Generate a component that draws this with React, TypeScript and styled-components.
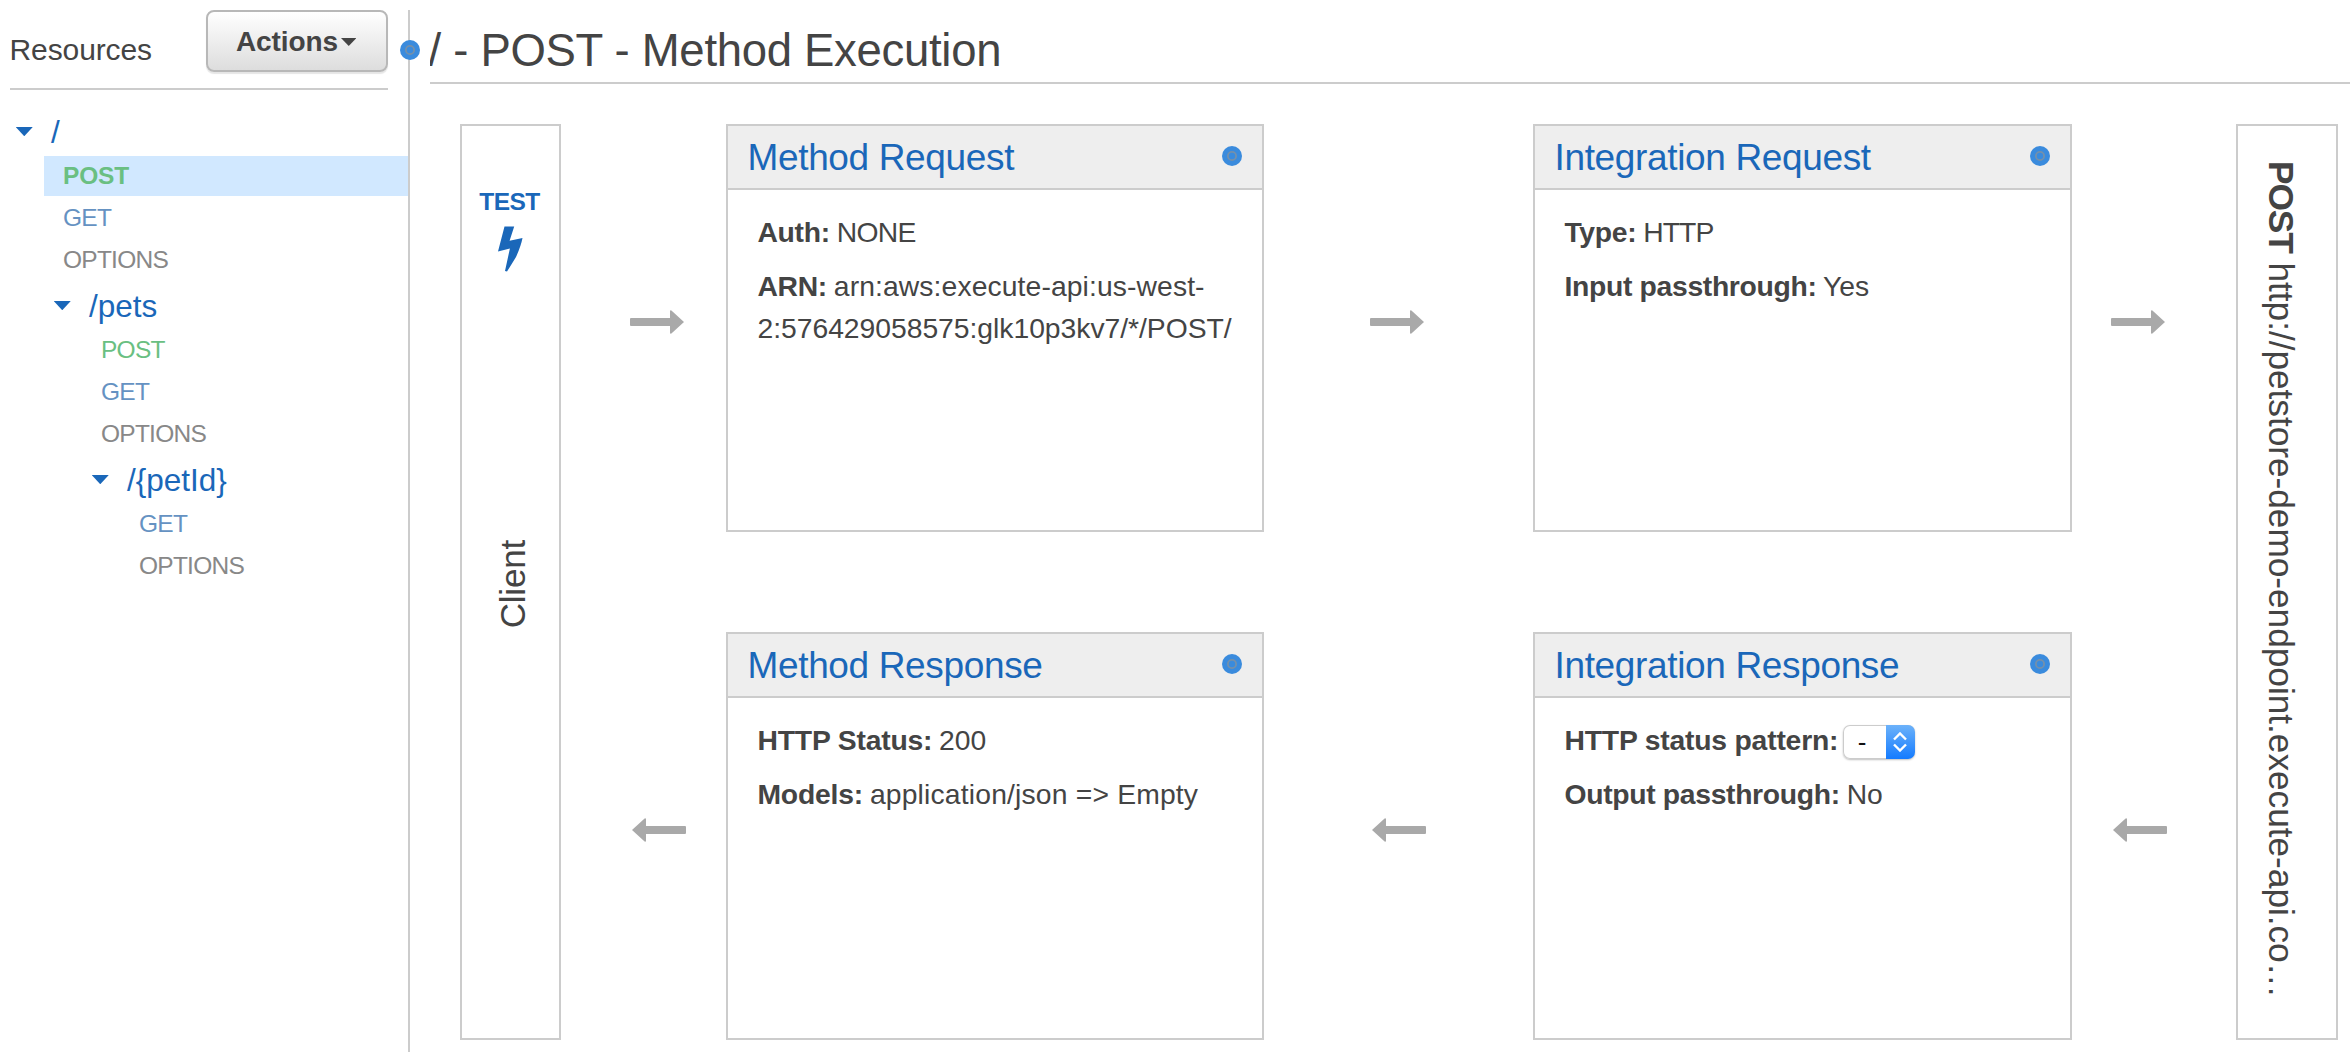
import React from 'react';
import styled, { createGlobalStyle } from 'styled-components';

const GlobalStyle = createGlobalStyle`
  * { box-sizing: border-box; }
  body {
    margin: 0;
    background: #fff;
    color: #444;
    font-family: "Liberation Sans", Arial, Helvetica, sans-serif;
  }
`;

const LINE = '#ccc';
const LINK = '#1a67b9';

const Page = styled.div`
  display: flex;
  height: 1052px;
  overflow: hidden;
`;

/* ---------- sidebar ---------- */

const Sidebar = styled.aside`
  position: relative;
  flex: none;
  width: 410px;
  margin-top: 10px;
  border-right: 2px solid ${LINE};
`;

const SidebarHead = styled.div`
  display: flex;
  justify-content: space-between;
  align-items: flex-start;
  height: 80px;
  margin: 0 20px 0 10px;
  border-bottom: 2px solid ${LINE};
`;

const SidebarTitle = styled.h2`
  margin: 20px 0 0 -0.5px;
  font-size: 30px;
  line-height: 40px;
  font-weight: 400;
  letter-spacing: -0.1px;
`;

const ActionsButton = styled.button`
  display: flex;
  align-items: center;
  width: 182px;
  height: 62px;
  padding: 2px 0 0 28px;
  border: 2px solid #b8b8b8;
  border-radius: 8px;
  background: linear-gradient(#fff, #ddd);
  box-shadow: 0 2px 1px rgba(0, 0, 0, 0.1);
  color: #444;
  font: bold 28px "Liberation Sans", Arial, sans-serif;
  letter-spacing: -0.1px;
`;

const Caret = styled.span<{ $w: number; $h: number; $color: string }>`
  flex: none;
  width: ${(p) => p.$w}px;
  height: ${(p) => p.$h}px;
  background: ${(p) => p.$color};
  clip-path: polygon(0 0, 100% 0, 50% 100%);
`;

const ActionsLabel = styled.span`
  margin-right: 3px;
`;

const SplitHandle = styled.div`
  position: absolute;
  top: 30px;
  right: -12px;
  display: flex;
`;

const Tree = styled.nav`
  padding-top: 18px;
`;

const Branch = styled.div<{ $nested?: boolean }>`
  margin-left: ${(p) => (p.$nested ? 38 : 0)}px;
`;

const Node = styled.div`
  display: flex;
  align-items: center;
  gap: 18px;
  height: 48px;
  padding: 0 0 1px 15.5px;
  color: ${LINK};
  font-size: 31.5px;
`;

const NodeName = styled.span`
  line-height: 46px;
`;

const Method = styled.div<{ $color: string; $active?: boolean }>`
  height: 40px;
  margin: 0 0 2px 44px;
  padding-left: 19px;
  font-size: 24.5px;
  line-height: 39px;
  letter-spacing: ${(p) => (p.$active ? -0.2 : -0.75)}px;
  font-weight: ${(p) => (p.$active ? 700 : 400)};
  color: ${(p) => p.$color};
  background: ${(p) => (p.$active ? '#d1e8ff' : 'transparent')};
`;

/* ---------- main pane ---------- */

const Main = styled.main`
  flex: 1;
  margin-left: 20px;
  min-width: 0;
  overflow: hidden;
`;

const PageTitle = styled.h1`
  margin: 0;
  height: 84px;
  padding-top: 19px;
  border-bottom: 2px solid ${LINE};
  font-size: 45.5px;
  line-height: 64px;
  font-weight: 400;
  letter-spacing: -0.3px;
  text-indent: -1.5px;
  white-space: nowrap;
`;

const Flow = styled.div`
  display: grid;
  grid-template-columns: 101px 165px 538px 269px 539px 164px 102px;
  grid-template-rows: 408px 408px;
  row-gap: 100px;
  margin: 40px 0 0 30px;
`;

const Pillar = styled.section<{ $column: number }>`
  grid-row: 1 / span 2;
  grid-column: ${(p) => p.$column};
  display: flex;
  flex-direction: column;
  border: 2px solid ${LINE};
`;

const TestLink = styled.a`
  display: flex;
  flex-direction: column;
  align-items: center;
  margin-top: 60px;
  padding-right: 2px;
  color: ${LINK};
  font-size: 24.5px;
  font-weight: 700;
  line-height: 32px;
  letter-spacing: -0.5px;
`;

const Bolt = styled.svg`
  display: block;
  margin-top: 8px;
`;

const ClientLabel = styled.div`
  writing-mode: vertical-rl;
  transform: rotate(180deg);
  width: 42px;
  margin: 268px 0 0 30px;
  line-height: 42px;
  font-size: 35px;
  letter-spacing: -0.2px;
`;

const EndpointLabel = styled.div`
  writing-mode: vertical-rl;
  width: 42px;
  margin: 34.5px 0 0 22px;
  line-height: 42px;
  font-size: 35.3px;
  letter-spacing: -0.05px;
  white-space: nowrap;

  b {
    letter-spacing: -1.1px;
  }
`;

const ArrowCell = styled.div<{ $lead: number }>`
  padding: 186px 0 0 ${(p) => p.$lead}px;

  svg {
    display: block;
  }
`;

const Card = styled.section`
  border: 2px solid ${LINE};
`;

const CardHead = styled.header`
  display: flex;
  justify-content: space-between;
  align-items: flex-start;
  height: 64px;
  padding: 0 20px 0 19.5px;
  background: #eee;
  border-bottom: 2px solid ${LINE};

  svg {
    margin-top: 20px;
  }
`;

const CardTitle = styled.h3`
  margin: 1px 0 0;
  font-size: 37px;
  line-height: 62px;
  font-weight: 400;
  letter-spacing: -0.35px;
  color: ${LINK};
`;

const CardBody = styled.div`
  padding: 21px 20px 0 29.5px;
`;

const Field = styled.p`
  margin: 0 0 12px;
  font-size: 28.3px;
  line-height: 42px;
  white-space: nowrap;
`;

const Label = styled.b<{ $tight?: boolean }>`
  margin-right: -1px;
  letter-spacing: ${(p) => (p.$tight ? -0.32 : -0.2)}px;
`;

const Value = styled.span<{ $spacing?: number }>`
  letter-spacing: ${(p) => p.$spacing ?? 0}px;
`;

const FieldRow = styled(Field)`
  display: flex;
  height: 42px;
`;

const Picker = styled.span`
  display: flex;
  width: 72px;
  height: 34px;
  margin: 6px 0 0 5.5px;
  border-radius: 7px;
  overflow: hidden;
  background: #fff;
  box-shadow: inset 0 0 0 1px #ccc, 0 1px 2px rgba(0, 0, 0, 0.25);
`;

const PickerValue = styled.span`
  width: 43px;
  padding-left: 15px;
  color: #111;
  font-size: 26px;
  line-height: 34px;
`;

const PickerArrows = styled.span`
  display: flex;
  align-items: center;
  justify-content: center;
  width: 29px;
  background: linear-gradient(#6cb2fa, #147bff);
`;

const Dot = () => (
  <svg width="20" height="20" viewBox="0 0 20 20">
    <circle cx="10" cy="10" r="10" fill="#3a8bdd" />
    <circle cx="10" cy="10" r="4.1" fill="none" stroke="#7490ab" strokeWidth="1.8" />
  </svg>
);

const Arrow = ({ left }: { left?: boolean }) => (
  <svg width="54" height="24" viewBox="0 0 54 24" fill="#a9a9a9">
    <path
      d={
        left
          ? 'M0 12 12.6.4Q14 0 14 1.2V8H53Q54 8 54 9V15Q54 16 53 16H14V22.8Q14 24 12.6 23.6Z'
          : 'M54 12 41.4.4Q40 0 40 1.2V8H1Q0 8 0 9V15Q0 16 1 16H40V22.8Q40 24 41.4 23.6Z'
      }
    />
  </svg>
);

const GREEN = '#6abf82';
const BLUE = '#6592c2';
const GREY = '#888';

const ApiNode = ({ name }: { name: string }) => (
  <Node>
    <Caret $w={17.5} $h={9.5} $color={LINK} />
    <NodeName>{name}</NodeName>
  </Node>
);

const StageCard = ({ title, children }: { title: string; children: React.ReactNode }) => (
  <Card>
    <CardHead>
      <CardTitle>{title}</CardTitle>
      <Dot />
    </CardHead>
    <CardBody>{children}</CardBody>
  </Card>
);

export default function App() {
  return (
    <Page>
      <GlobalStyle />
      <Sidebar>
        <SidebarHead>
          <SidebarTitle>Resources</SidebarTitle>
          <ActionsButton>
            <ActionsLabel>Actions</ActionsLabel>
            <Caret $w={15.5} $h={8} $color="#444" />
          </ActionsButton>
        </SidebarHead>
        <Tree>
          <ApiNode name="/" />
          <Branch>
            <Method $color={GREEN} $active>POST</Method>
            <Method $color={BLUE}>GET</Method>
            <Method $color={GREY}>OPTIONS</Method>
            <Branch $nested>
              <ApiNode name="/pets" />
              <Method $color={GREEN}>POST</Method>
              <Method $color={BLUE}>GET</Method>
              <Method $color={GREY}>OPTIONS</Method>
              <Branch $nested>
                <ApiNode name="/{petId}" />
                <Method $color={BLUE}>GET</Method>
                <Method $color={GREY}>OPTIONS</Method>
              </Branch>
            </Branch>
          </Branch>
        </Tree>
        <SplitHandle>
          <Dot />
        </SplitHandle>
      </Sidebar>

      <Main>
        <PageTitle>/ - POST - Method Execution</PageTitle>
        <Flow>
          <Pillar $column={1}>
            <TestLink>
              TEST
              <Bolt width="26" height="46" viewBox="0 0 26 46" fill={LINK}>
                <path d="M7.5.5H17.2L12.6 14.8 25.5 12Q24 20 19 31L10 45.5 8 45 12.9 22.5 1 25.5Z" />
              </Bolt>
            </TestLink>
            <ClientLabel>Client</ClientLabel>
          </Pillar>

          <ArrowCell $lead={69}><Arrow /></ArrowCell>
          <StageCard title="Method Request">
            <Field><Label $tight>Auth:</Label> <Value $spacing={-0.7}>NONE</Value></Field>
            <Field>
              <Label $tight>ARN:</Label> <Value $spacing={0.1}>arn:aws:execute-api:us-west-</Value>
              <br />
              <Value $spacing={-0.03}>2:576429058575:glk10p3kv7/*/POST/</Value>
            </Field>
          </StageCard>
          <ArrowCell $lead={106}><Arrow /></ArrowCell>
          <StageCard title="Integration Request">
            <Field><Label $tight>Type:</Label> <Value $spacing={-0.9}>HTTP</Value></Field>
            <Field><Label $tight>Input passthrough:</Label> <Value>Yes</Value></Field>
          </StageCard>
          <ArrowCell $lead={39}><Arrow /></ArrowCell>

          <Pillar $column={7}>
            <EndpointLabel><b>POST</b> http://petstore-demo-endpoint.execute-api.co…</EndpointLabel>
          </Pillar>

          <ArrowCell $lead={71}><Arrow left /></ArrowCell>
          <StageCard title="Method Response">
            <Field><Label>HTTP Status:</Label> <Value>200</Value></Field>
            <Field><Label>Models:</Label> <Value $spacing={0.17}>application/json =&gt; Empty</Value></Field>
          </StageCard>
          <ArrowCell $lead={108}><Arrow left /></ArrowCell>
          <StageCard title="Integration Response">
            <FieldRow>
              <Label>HTTP status pattern:</Label>
              <Picker>
                <PickerValue>-</PickerValue>
                <PickerArrows>
                  <svg width="14" height="20" viewBox="0 0 14 20" fill="none" stroke="#fff" strokeWidth="2.4">
                    <path d="M1 7.5 7 1.5 13 7.5M1 12.5 7 18.5 13 12.5" />
                  </svg>
                </PickerArrows>
              </Picker>
            </FieldRow>
            <Field><Label $tight>Output passthrough:</Label> <Value>No</Value></Field>
          </StageCard>
          <ArrowCell $lead={41}><Arrow left /></ArrowCell>
        </Flow>
      </Main>
    </Page>
  );
}
